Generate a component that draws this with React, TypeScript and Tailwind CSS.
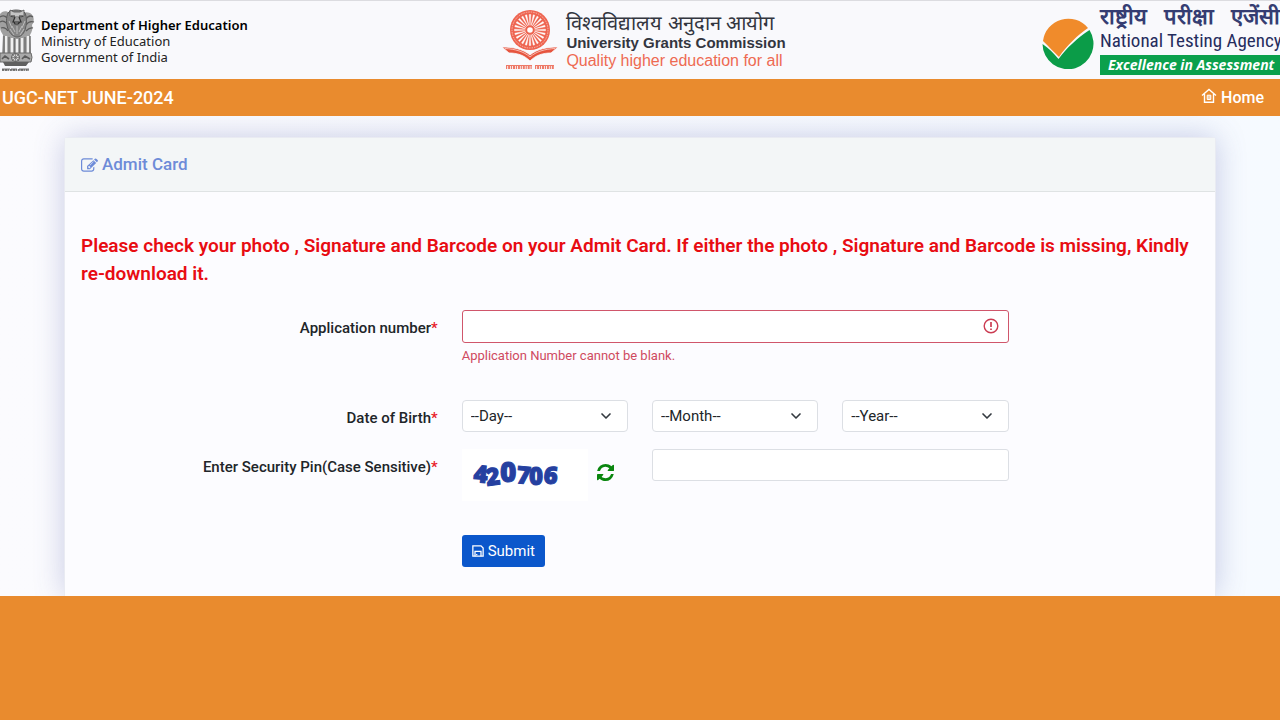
import { useState } from 'react';
import { ChevronDown } from 'lucide-react';

interface FormState {
  applicationNumber: string;
  day: string;
  month: string;
  year: string;
  pin: string;
}

const days = Array.from({ length: 31 }, (_, i) => String(i + 1));
const months = ['January', 'February', 'March', 'April', 'May', 'June', 'July', 'August', 'September', 'October', 'November', 'December'];
const years = Array.from({ length: 60 }, (_, i) => String(2006 - i));

function Emblem() {
  return (
    <svg viewBox="0 0 35 62" className="h-[62px] w-[35px] shrink-0" aria-hidden="true">
      {/* side lions */}
      <path d="M10 4C6 1 2 2 0 5v13c0 4 2 6 3 8l-1 18h29l-1-18c2-3 3-7 2-10 3-4 2-10-2-12-3-1-5-1-7 0z" fill="#a0a0a0" />
      <path d="M0 8c3-2 6-1 8 2M0 13c3-2 6 0 8 3M1 19c3-1 5 0 7 3M33 8c-3-2-5-1-7 2M34 13c-3-1-6 0-8 3M33 19c-3-1-5 1-7 3" stroke="#5c5c5c" strokeWidth="1.2" fill="none" />
      {/* front lion */}
      <path d="M8 4c2-4 14-4 17 0 2 4 2 11 0 17-2 5-5 7-8 7s-7-3-9-8C6 15 6 8 8 4z" fill="#858585" stroke="#5c5c5c" />
      <path d="M10 1l4 2h6l4-2v6l-3 1h-8l-3-1z" fill="#c4c4c4" stroke="#505050" strokeWidth=".8" />
      <path d="M11 7h4M19 7h4M15 8l-2 5h8l-2-5M14 13h6l-2 2h-3z" stroke="#303030" strokeWidth="1.2" fill="#9c9c9c" />
      <path d="M9 12l3 7M25 12l-3 7M12 17l3 6M22 17l-3 6M17 17v8M10 20l4 6M24 20l-4 6" stroke="#bdbdbd" strokeWidth="1" />
      {/* legs */}
      <path d="M6 27v17M12 29v15M17 30v14M22 29v15M28 27v17" stroke="#efefef" strokeWidth="2.4" />
      <path d="M4 27v17M9 28v16M14.500 29v15M19.500 29v15M25 28v16M30 27v17" stroke="#707070" strokeWidth="1.4" />
      {/* abacus with the wheel */}
      <path d="M0 44h31q2 4 0 9H0z" fill="#a9a9a9" stroke="#6a6a6a" />
      <circle cx="15.500" cy="48.500" r="4" fill="#d6d6d6" stroke="#555" />
      <path d="M11.500 48.500h8M15.500 44.500v8M12.700 45.700l5.600 5.600M18.300 45.700l-5.600 5.600" stroke="#666" strokeWidth=".7" />
      <path d="M2 50l3-3 4 3M22 50l3-3 5 3" stroke="#5a5a5a" strokeWidth="1.600" fill="none" />
      <path d="M3 53h26l-3 4H5z" fill="#606060" />
      <path d="M2 61h27" stroke="#777" strokeWidth="2" strokeDasharray="2 .6 3 .5 1 .8" />
      <path d="M2 60h8M11 60h6M19 60h10" stroke="#555" strokeWidth=".8" />
    </svg>
  );
}

function UgcLogo() {
  const spokes = Array.from({ length: 24 }, (_, i) => i * 15);
  return (
    <svg viewBox="0 0 56 62" className="h-[62px] w-14 shrink-0" aria-hidden="true">
      <circle cx="28" cy="21" r="20" fill="#ee6450" />
      <circle cx="28" cy="21" r="18" fill="none" stroke="#fbd6cf" strokeWidth=".7" strokeDasharray="1.500 1" />
      {spokes.map((a) => (
        <path key={a} d="M28 16.500L27.200 5.500h1.600z" fill="#fff" stroke="#fff" strokeWidth=".4" transform={`rotate(${a} 28 21)`} />
      ))}
      <circle cx="28" cy="21" r="4.500" fill="#ee6450" />
      <circle cx="28" cy="21" r="2.800" fill="#fff" />
      <path d="M0 38c11 0 21 2 28 8 7-6 17-8 28-8l-7 6c-8 0-15 2-21 8-6-6-13-8-21-8z" fill="#e6553f" stroke="#fafafc" strokeWidth=".8" />
      <path d="M3 39.500c10 .5 19 3 25 8.500 6-5.500 15-8 25-8.500" fill="none" stroke="#fbd6cf" strokeWidth=".8" />
      <path d="M4 56.500h26M33 56.500h19" stroke="#ee7a68" strokeWidth="1" />
      <path d="M4 58.500h26M33 58.500h19" stroke="#ee7a68" strokeWidth="3" strokeDasharray="1.200 .9 2 .8" />
    </svg>
  );
}

function NtaLogo() {
  return (
    <svg viewBox="0 0 52 52" className="h-[52px] w-[52px] shrink-0" aria-hidden="true">
      <path d="M1 24A25.500 25.500 0 0 1 46 11C36 18 25 28 17 40 12 35 7 30 1 24z" fill="#f08b2b" />
      <path d="M.5 27c6 4 11 9 16 15 8-11 19-21 31-29A25.500 25.500 0 1 1 .5 27z" fill="#0b9c48" />
    </svg>
  );
}

function HomeIcon() {
  return (
    <svg viewBox="0 0 16 16" className="mb-1 size-4" fill="none" stroke="currentColor" strokeWidth="1.400" aria-hidden="true">
      <path d="M1 7.500L8 1.500l7 6M3.500 6v8.300h9V6" />
      <path d="M6.200 7.200h3.600v4.300H6.200z" fill="currentColor" fillOpacity=".6" strokeWidth="1" />
    </svg>
  );
}

function EditIcon() {
  return (
    <svg viewBox="0 0 1792 1664" className="h-4 w-[17px]" fill="currentColor" aria-hidden="true">
      <path d="M888 1184l116-116-152-152-116 116v56h96v96h56zm440-720q-16-16-33 1L945 815q-17 17-1 33t33-1l350-350q17-17 1-33zm80 594v190q0 119-84.500 203.500T1120 1536H288q-119 0-203.500-84.500T0 1248V416q0-119 84.500-203.500T288 128h832q63 0 117 25 15 7 18 23 3 17-9 29l-49 49q-14 14-32 8-23-6-45-6H288q-66 0-113 47t-47 113v832q0 66 47 113t113 47h832q66 0 113-47t47-113v-126q0-13 9-22l64-64q15-15 35-7t20 29zm-96-738l288 288-672 672H640V928zm444 132l-92 92-288-288 92-92q28-28 68-28t68 28l152 152q28 28 28 68t-28 68z" />
    </svg>
  );
}

function RefreshIcon() {
  return (
    <svg viewBox="0 0 1536 1536" className="size-[17px]" fill="currentColor" aria-hidden="true">
      <path d="M1511 928q0 5-1 7-64 268-268 434.500T764 1536q-146 0-282.500-55T238 1324l-129 129q-19 19-45 19t-45-19-19-45V960q0-26 19-45t45-19h448q26 0 45 19t19 45-19 45l-137 137q71 66 161 102t187 36q134 0 250-65t186-179q11-17 53-117 8-23 30-23h192q13 0 22.500 9.500t9.500 22.500zm25-800v448q0 26-19 45t-45 19h-448q-26 0-45-19t-19-45 19-45l138-138Q969 256 768 256q-134 0-250 65T332 500q-11 17-53 117-8 23-30 23H50q-13 0-22.500-9.500T18 608v-7q65-268 270-434.500T768 0q146 0 284 55.500T1297 212l130-129q19-19 45-19t45 19 19 45z" />
    </svg>
  );
}

function SaveIcon() {
  return (
    <svg viewBox="0 0 14 14" className="size-3" fill="none" stroke="currentColor" strokeWidth="1.500" aria-hidden="true">
      <path d="M1 1h9.500L13 3.500V13H1z" />
      <path d="M3.500 13V7.500h7V13M5.500 10.500v1.500" />
    </svg>
  );
}

function Captcha() {
  return (
    <svg viewBox="0 0 126 52" className="h-[52px] w-[126px] bg-white" role="img" aria-label="Security pin">
      <text
        x="11 25 38 54 67 81"
        y="33 37 33 34 36 34"
        rotate="5 -8 0 5 0 6"
        className="fill-[#2540a0] stroke-[#2540a0] font-['Open_Sans',sans-serif] text-2xl font-extrabold"
        strokeWidth="1"
      >
        42<tspan className="text-[28px]">0</tspan>706
      </text>
    </svg>
  );
}

interface DateSelectProps {
  name: string;
  placeholder: string;
  options: string[];
  value: string;
  onChange: (e: React.ChangeEvent<HTMLSelectElement>) => void;
}

function DateSelect({ name, placeholder, options, value, onChange }: DateSelectProps) {
  return (
    <div className="relative col-span-2">
      <select
        id={name}
        name={name}
        aria-label={name}
        value={value}
        onChange={onChange}
        className="h-8 w-full appearance-none rounded border border-[#dcdfe4] bg-white pl-2 pr-8 text-[15px] text-[#212529]"
      >
        <option value="">{placeholder}</option>
        {options.map((option) => (
          <option key={option} value={option}>{option}</option>
        ))}
      </select>
      <ChevronDown className="pointer-events-none absolute right-3.5 top-2 size-4 text-[#343a40]" strokeWidth={2.5} />
    </div>
  );
}

export default function App() {
  const [formData, setFormData] = useState<FormState>({
    applicationNumber: '',
    day: '',
    month: '',
    year: '',
    pin: '',
  });

  const handleChange = (e: React.ChangeEvent<HTMLInputElement | HTMLSelectElement>) => {
    const { name, value } = e.target;
    setFormData((prev) => ({ ...prev, [name]: value }));
  };

  const isBlank = formData.applicationNumber === '';

  return (
    <div className="min-h-screen bg-[#e98b2e] font-['Roboto',sans-serif] text-[#212529]">
      <header className="flex h-[79px] items-start justify-between border-t border-[#dcdce0] bg-[#f9f9fc]">
        <div className="flex w-[384px] gap-1.5 pt-2">
          <Emblem />
          <div className="pt-2 font-['Noto_Sans',sans-serif] text-[13px] leading-4 text-[#222]">
            <p className="font-semibold text-black">Department of Higher Education</p>
            <p>Ministry of Education</p>
            <p>Government of India</p>
          </div>
        </div>

        <div className="flex gap-2 pt-2">
          <UgcLogo />
          <div className="pt-1 font-['Liberation_Sans',sans-serif] whitespace-nowrap">
            <p className="text-xl leading-5 font-medium text-[#33363f]">विश्वविद्यालय अनुदान आयोग</p>
            <p className="text-[15px] leading-5 font-bold text-[#33363f]">University Grants Commission</p>
            <p className="text-base leading-4 text-[#ee6a52]">Quality higher education for all</p>
          </div>
        </div>

        <div className="flex w-[376px] justify-end gap-1.5 pt-1.5">
          <div className="pt-2.5">
            <NtaLogo />
          </div>
          <div className="w-[180px] whitespace-nowrap">
            <p className="flex justify-between text-[22px] leading-5 font-semibold text-[#353d72]">
              <span>राष्ट्रीय</span> <span>परीक्षा</span> <span>एजेंसी</span>
            </p>
            <p className="font-['Roboto_Condensed','Roboto',sans-serif] text-[19px] leading-7 text-[#252c5c]">National Testing Agency</p>
            <p className="bg-[#0ba04c] pl-2 font-['Open_Sans',sans-serif] text-sm leading-5 font-bold text-white italic">Excellence in Assessment</p>
          </div>
        </div>
      </header>

      <nav className="flex h-[37px] items-center justify-between bg-[#e98b2e] pr-4 pl-0.5 text-white">
        <span className="text-lg font-medium">UGC-NET JUNE-2024</span>
        <a href="#" className="flex items-center gap-1 text-base font-medium">
          <HomeIcon />
          Home
        </a>
      </nav>

      <main className="overflow-hidden bg-linear-to-r from-[#fbfbfe] to-[#f6faff] px-16 pt-[21px]">
        <section className="rounded-t border border-b-0 border-[#e9ebf2] bg-[#fcfcff] shadow-[0_0_30px_rgba(70,80,160,0.28)]">
          <h1 className="flex h-[54px] items-center gap-1 border-b border-[#dfe3e4] bg-[#f3f6f7] px-4 text-[17px] font-medium text-[#6d8bd8]">
            <EditIcon />
            Admit Card
          </h1>

          <form onSubmit={(e) => e.preventDefault()} className="px-4 pt-10 pb-[29px] text-[15px]">
            <p className="mb-[22px] text-[19px] leading-7 font-semibold text-[#e80c12]">
              Please check your photo , Signature and Barcode on your Admit Card. If either the photo , Signature and Barcode is missing, Kindly re-download it.
            </p>

            <div className="grid grid-cols-12 gap-x-6">
              <label htmlFor="applicationNumber" className="col-span-4 pt-2 text-right leading-5 font-medium">
                Application number<span className="text-[#e8202a]">*</span>
              </label>
              <div className="relative col-span-6 h-[90px]">
                <input
                  id="applicationNumber"
                  name="applicationNumber"
                  type="text"
                  value={formData.applicationNumber}
                  onChange={handleChange}
                  className="h-[33px] w-full rounded-[3px] border border-[#d0566b] bg-white px-2 pr-8"
                />
                <svg viewBox="0 0 16 16" className="absolute top-2 right-2.5 size-4 text-[#cb3c52]" fill="none" stroke="currentColor" strokeWidth="1.400" aria-hidden="true">
                  <circle cx="8" cy="8" r="6.800" />
                  <path d="M8 4v5M8 10.500v1.500" strokeWidth="1.700" />
                </svg>
                {isBlank && <p className="pt-1 text-[13px] leading-[18px] text-[#cf4a60]">Application Number cannot be blank.</p>}
              </div>
            </div>

            <div className="mb-[17px] grid grid-cols-12 gap-x-6">
              <label htmlFor="day" className="col-span-4 pt-2 text-right leading-5 font-medium">
                Date of Birth<span className="text-[#e8202a]">*</span>
              </label>
              <DateSelect name="day" placeholder="--Day--" options={days} value={formData.day} onChange={handleChange} />
              <DateSelect name="month" placeholder="--Month--" options={months} value={formData.month} onChange={handleChange} />
              <DateSelect name="year" placeholder="--Year--" options={years} value={formData.year} onChange={handleChange} />
            </div>

            <div className="mb-[34px] grid grid-cols-12 gap-x-6">
              <label htmlFor="pin" className="col-span-4 pt-2 text-right leading-5 font-medium">
                Enter Security Pin(Case Sensitive)<span className="text-[#e8202a]">*</span>
              </label>
              <div className="col-span-2 flex items-center gap-[9px]">
                <Captcha />
                <button type="button" aria-label="Refresh security pin" className="pb-1.5 text-[#0a860f]">
                  <RefreshIcon />
                </button>
              </div>
              <input
                id="pin"
                name="pin"
                type="text"
                value={formData.pin}
                onChange={handleChange}
                className="col-span-4 h-8 rounded-[3px] border border-[#dcdfe4] bg-white px-2"
              />
            </div>

            <div className="grid grid-cols-12 gap-x-6">
              <div className="col-span-6 col-start-5">
                <button type="submit" className="flex h-8 items-center gap-1 rounded-[3px] bg-[#0b57cb] px-2.5 text-white">
                  <SaveIcon />
                  Submit
                </button>
              </div>
            </div>
          </form>
        </section>
      </main>
    </div>
  );
}
